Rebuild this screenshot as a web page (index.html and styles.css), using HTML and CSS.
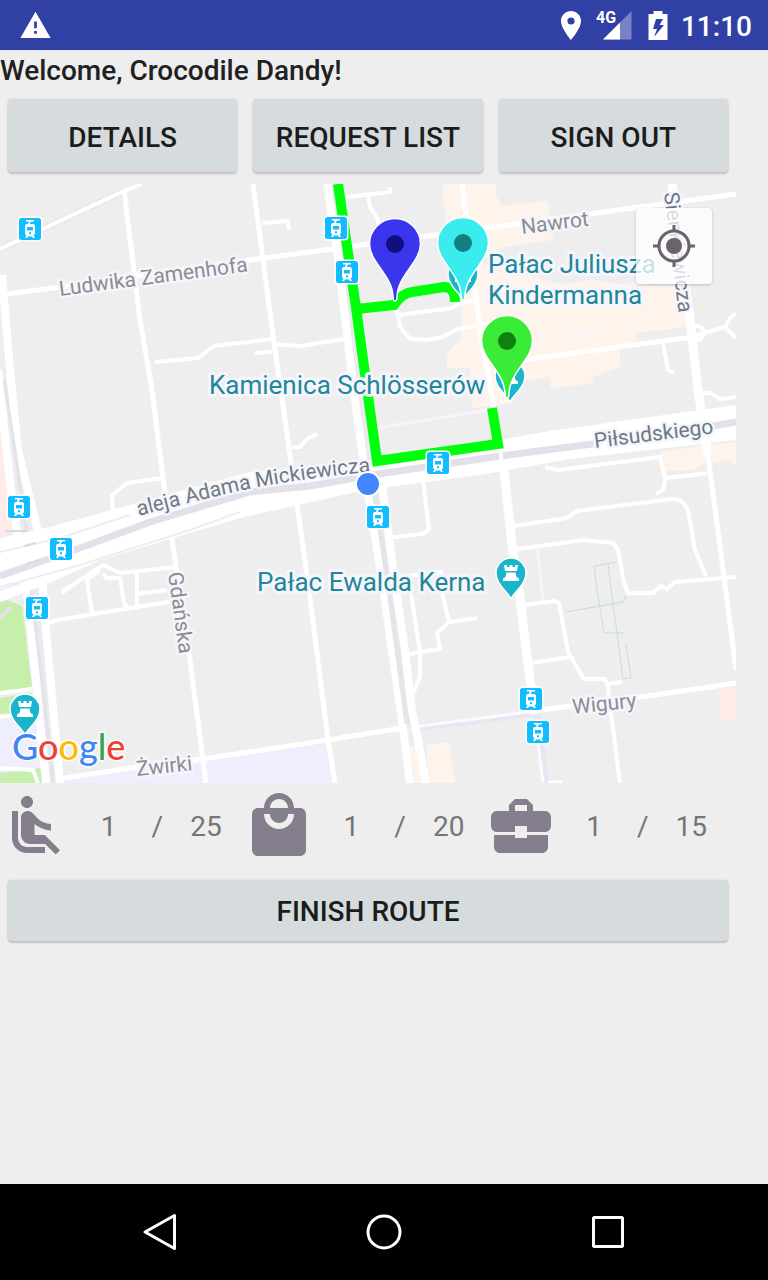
FILE: index.html
```html
<!DOCTYPE html>
<html lang="en">
<head>
<meta charset="utf-8">
<meta name="viewport" content="width=device-width, initial-scale=1">
<title>Route</title>
<link rel="stylesheet" href="styles.css">
</head>
<body>
<header class="status">
  <svg class="status-warning" viewBox="0 0 24 24" aria-hidden="true"><path d="M1 21h22L12 2 1 21zm12-3h-2v-2h2v2zm0-4h-2v-5h2v5z"/></svg>
  <div class="status-right">
    <svg class="status-pin" viewBox="0 0 20 29" aria-hidden="true"><path fill-rule="evenodd" d="M10 0C4.500 0 0 4.400 0 10c0 7.500 10 19 10 19s10-11.500 10-19c0-5.600-4.500-10-10-10zm0 13.600a3.600 3.600 0 1 1 0-7.200 3.600 3.600 0 0 1 0 7.200z"/></svg>
    <svg class="status-signal" viewBox="0 0 36 30" aria-hidden="true"><text class="signal-text" x="0" y="13">4G</text><path opacity=".35" d="M7 29.500 35.500 1v28.500z"/><path d="M7 29.500 24 12.500v17z"/></svg>
    <svg class="status-battery" viewBox="0 0 20 29" aria-hidden="true"><path fill-rule="evenodd" d="M5.500 0h9v3H19.500v26H.5V3h5zM8 8 5 18h4l-3 8 10-12h-4.500L15 8z"/></svg>
    <time class="status-time">11:10</time>
  </div>
</header>

<main class="page">
  <h1 class="welcome">Welcome, Crocodile Dandy!</h1>
  <div class="actions">
    <button class="btn btn-tall" type="button">DETAILS</button>
    <button class="btn btn-tall" type="button">REQUEST LIST</button>
    <button class="btn btn-tall" type="button">SIGN OUT</button>
  </div>

  <section class="map" aria-label="Map">
    <svg class="map-canvas" viewBox="0 184 736 599">
      <defs>
        <g id="tram">
          <rect x="-12.500" y="-12.500" width="25" height="25" rx="4" fill="#fff"/>
          <rect x="-11" y="-11" width="22" height="22" rx="2.500" fill="#12bdff"/>
          <path fill="#fff" fill-rule="evenodd" d="M-4-9H4v1.500H1L-.5-5H3q2 0 2 2V4.500Q5 6 3.500 6.500L5 9H3L2 7.500H-2L-3 9H-5L-3.500 6.500Q-5 6-5 4.500V-3q0-2 2-2h.8L-1-7.500H-4zM-3-2V1.500H3V-2zM-1 3.300V5.300H1V3.300z"/>
        </g>
        <g id="castle">
          <path fill="#1bb4cd" stroke="#fff" stroke-width="1.500" d="M0 26C-3 19-15 12-15 0A15 15 0 0 1 15 0C15 12 3 19 0 26z"/>
          <path fill="#fff" d="M-7-8h3v2h2.500v-2h3v2h2.500v-2h3L6-2H-6zM-4.500-.5H4.500L5.500 4 8 5.500V8H-8V5.500L-5.500 4z"/>
        </g>
        <path id="pin" stroke="#fff" stroke-width="1.500" d="M0 57C-1.500 57-2 54-2 52C-3 31-25.500 18-25.500 0A25.500 25.500 0 0 1 25.500 0C25.500 18 3 31 2 52C2 54 1.500 57 0 57z"/>
        <path id="aleja" d="M139 516Q190 502 248 489Q310 477 380 471"/>
      </defs>

      <rect y="184" width="736" height="599" fill="#eee"/>
      <g fill="#fff4ec">
        <path d="M442 184H496V196L502 206 548 201 553 240 500 248 480 262 560 284 593 280 625 285 683 287 687 327 637 333V340L620 347V367L593 377V383L551 389 549 377 522 382 512 403 472 408 470 368H447V353L460 340 462 313 457 273 450 250z"/>
        <path d="M660 452 709 445V461L693 470 665 471zM712 445 736 442V466L727 460 712 463zM427 745 449 742 455 783H429zM410 747 420 745 423 783H415z"/>
      </g>
      <path fill="#ffecea" d="M0 423 10 497 12 530 0 535zM718 689 736 687V721L722 722z"/>
      <path fill="#f3eeee" d="M55 590 66 585 56 620 48 640z"/>
      <path fill="#eef" d="M0 718 38 714 45 783H0zM62 783 66 778 203 759 325 745 332 783z"/>
      <path fill="#c5efaa" d="M0 602 7 600 22 606 32 687 0 692zM0 698 32 693 33 711 0 714zM0 773 42 768 43 783H0z"/>

      <g fill="none" stroke="#e8e7f1" stroke-width="7">
        <path d="M0 249 124 191"/><path d="M412 728 490 719 538 712"/><path d="M537 715 546 783"/>
      </g>
      <g fill="none" stroke="#f7f4fc" stroke-width="3">
        <path d="M377 428 487 410"/><path d="M537 547 543 600"/><path d="M480 300 515 296M575 323 577 336 598 333M540 298 677 278"/>
      </g>
      <g fill="none" stroke="#fff" stroke-width="4" stroke-linejoin="round">
        <path d="M0 249 124 191 142 184"/>
        <path d="M155 362 198 358 214 346 272 339M255 353 272 352M272 344 300 346 345 339M262 223 288 221 289 230"/>
        <path d="M346 197 390 192V187M368 195 370 207 378 220V235M395 310 400 315 452 308 460 303 477 300M398 313 400 327 410 339 427 340 443 337 458 329 490 323 512 319"/>
        <path d="M292 447 300 447 307 439 317 434M423 480 429 530 422 534 387 538M397 577 443 572M411 593 420 652V677L411 698M403 655 440 649 437 633 449 622 477 618M449 622 442 593M395 607 402 606"/>
        <path d="M113 510 112 495 127 483 163 478M62 592 103 565 120 573 177 567M137 573V607M100 570 87 580 92 613M103 574 107 578 120 578 124 603 128 608M48 623 57 620 137 607 170 602M137 594 167 590M62 593 80 580"/>
        <path d="M545 467 558 470 660 457 665 480 663 490 656 494M665 478 710 473M703 393 710 393 720 399 736 397M513 526 567 518 577 511 672 499Q680 499 684 504L688 510 695 550 706 576"/>
        <path d="M517 549 583 540 613 543 618 550 624 583 628 593 653 593 661 586 667 589 675 582 736 577M523 605 555 601 559 603 568 652 584 679 605 679 608 687 611 713 620 783M532 663 570 657M608 684 622 682"/>
        <path d="M690 337 725 327 736 338M725 327 730 318 736 313M663 343 668 370 674 373M548 783 562 782"/>
        <circle cx="697" cy="333" r="7"/>
        <path d="M0 693 32 689M0 717 40 712M0 768 33 770 38 783"/>
      </g>
      <path fill="none" stroke="#e2e0e6" stroke-width="4" d="M0 618 11 607"/>
      <g fill="none" stroke="#fff" stroke-width="5" stroke-linejoin="round">
        <path d="M124 190 140 320 152 390 163 478 172 540 188 645 203 760 206 783"/>
        <path d="M0 295 60 287 250 260 332 249 530 222 736 194"/>
        <path d="M253 184 275 350 295 490 309 590 328 740 335 783"/>
        <path d="M58 779 130 768 203 759 328 740 402 728 420 728M540 710 620 700 736 683"/>
        <path d="M462 184 467 225 480 330 491 390 500 450"/>
        <path d="M523 360 693 337"/>
        <path d="M708 455 727 600 736 670"/>
      </g>
      <path fill="none" stroke="#fafaff" stroke-width="3" d="M412 727 490 717 540 710M535 720 543 783"/>
      <path fill="none" stroke="#fff" stroke-width="9" d="M672 184 690 320 698 390 708 455M501 450 505 480 513 553 519 590 530 680 535 714"/>

      <path fill="#ebeaef" d="M0 290 8 400 20 520 30 600 46 783H58L44 620 38 540 18 450 4 290zM332 184 343 184 360 310 375 460 392 560 406 655 420 730 402 730 386 600 365 480z"/>
      <g fill="none" stroke="#fff" stroke-width="8">
        <path d="M-2 370 12 500 28 600 46 783"/>
        <path d="M2 275 10 370 18 450 40 540 45 620 60 783"/>
        <path d="M327 184 337 250 353 385 366 480 382 580 402 720 410 783"/>
        <path d="M382 485 396 590 405 650 412 710 418 740 426 783"/>
      </g>
      <path fill="none" stroke="#e3e2ea" stroke-width="3" d="M4 380 15 450 26 530 32 600 42 680 53 783"/>
      <path fill="none" stroke="#e6e4ea" stroke-width="5" d="M374 490 389 590 407 724"/>
      <path fill="#fff" d="M0 538 50 527 250 472 365 462 378 458 500 440 550 431 736 405V440L570 459 480 475 365 490 240 518 100 560 50 583 0 602z"/>
      <path fill="none" stroke="#e2e1e9" stroke-width="7" d="M0 576 80 548 150 522 250 492 310 486 372 475 500 456 600 443M708 427 736 422"/>
      <path fill="none" stroke="#ededf5" stroke-width="2" d="M0 552 60 538 130 515M0 587 80 565 190 530 240 512M0 590 20 583"/>
      <path fill="none" stroke="#d9d9e0" stroke-width="2" d="M5 531H28M24 546 36 543M26 564 40 560M97 68"/>
      <path fill="none" stroke="#fff" stroke-width="4" d="M500 448 503 472"/>
      <g fill="none" stroke="#c5e0ca">
        <path d="M597 590 594 566 617 562M608 563 610 580 623 679 631 678 626 645M597 590 604 633 625 633M566 612 623 602 626 596"/>
      </g>

      <g class="street">
        <text transform="translate(60 296) rotate(-7.500)">Ludwika Zamenhofa</text>
        <text transform="translate(522 234) rotate(-7)">Nawrot</text>
        <text transform="translate(168 573) rotate(82)">Gdańska</text>
        <text transform="translate(573 714) rotate(-6)">Wigury</text>
        <text transform="translate(137 776) rotate(-6)">Żwirki</text>
      </g>
      <g class="street street-main">
        <text transform="translate(664 193) rotate(83)">Sienkiewicza</text>
        <text transform="translate(595 448) rotate(-7)">Piłsudskiego</text>
        <text><textPath href="#aleja">aleja Adama Mickiewicza</textPath></text>
      </g>

      <path fill="none" stroke="#00ff0a" stroke-width="10" d="M338 184 356 308 377 461 498 444 492 408M356 309 394 305 Q402 293 412 292L444 287Q455 287 455 302"/>

      <g class="poi">
        <text x="488" y="273">Pałac Juliusza</text>
        <text x="488" y="304">Kindermanna</text>
        <text x="209" y="394">Kamienica Schlösserów</text>
        <text x="257" y="591">Pałac Ewalda Kerna</text>
      </g>

      <use href="#castle" x="463" y="274"/>
      <use href="#castle" x="510" y="376"/>
      <use href="#castle" x="511" y="573"/>
      <use href="#castle" x="25" y="709"/>
      <use href="#tram" x="30" y="229"/>
      <use href="#tram" x="336" y="228"/>
      <use href="#tram" x="347" y="272"/>
      <use href="#tram" x="438" y="463"/>
      <use href="#tram" x="378" y="517"/>
      <use href="#tram" x="19" y="507"/>
      <use href="#tram" x="61" y="549"/>
      <use href="#tram" x="37" y="608"/>
      <use href="#tram" x="531" y="699"/>
      <use href="#tram" x="538" y="732"/>
      <circle cx="368" cy="484" r="12" fill="#4285ff" stroke="#fff" stroke-width="2"/>
      <use href="#pin" x="395" y="244" fill="#3a36ee"/><circle cx="395" cy="244" r="9" fill="#110f80"/>
      <use href="#pin" x="463" y="243" fill="#3aecee"/><circle cx="463" cy="243" r="9" fill="#118080"/>
      <use href="#pin" x="507" y="341" fill="#3aec38"/><circle cx="507" cy="341" r="9" fill="#11800f"/>

      <text class="google" x="12" y="760"><tspan fill="#4285f4">G</tspan><tspan fill="#ea4335">o</tspan><tspan fill="#fbbc05">o</tspan><tspan fill="#4285f4">g</tspan><tspan fill="#34a853">l</tspan><tspan fill="#ea4335">e</tspan></text>
    </svg>
    <button class="locate" type="button" aria-label="My location">
      <svg class="locate-icon" viewBox="0 0 42 42" aria-hidden="true"><circle cx="21" cy="21" r="8" fill="#6b626b"/><g fill="none" stroke="#6b626b" stroke-width="3"><circle cx="21" cy="21" r="15"/><path d="M21 0v7M21 35v7M0 21h7M35 21h7"/></g></svg>
    </button>
  </section>

  <div class="stats">
    <div class="stat">
      <svg class="stat-icon" viewBox="0 0 24 24" role="img" aria-label="Seats"><path d="M7.590 5.410c-.78-.78-.78-2.050 0-2.830.78-.78 2.050-.78 2.830 0 .78.78.78 2.050 0 2.830-.79.79-2.050.79-2.830 0zM6 16V7H4v9c0 2.760 2.240 5 5 5h6v-2H9c-1.660 0-3-1.340-3-3zm14 4.070L14.930 15H11.500v-3.680c1.400 1.150 3.600 2.160 5.500 2.160v-2.160c-1.660.02-3.610-.87-4.670-2.040l-1.400-1.550c-.19-.21-.43-.38-.69-.5-.29-.14-.62-.23-.96-.23h-.03C8.010 7 7 8.010 7 9.250V15c0 1.660 1.340 3 3 3h5.070l3.500 3.500L20 20.070z"/></svg>
      <span class="stat-value">1</span><span class="stat-slash">/</span><span class="stat-value">25</span>
    </div>
    <div class="stat">
      <svg class="stat-icon" viewBox="0 0 24 24" role="img" aria-label="Bags"><path d="M19 6h-2c0-2.760-2.240-5-5-5S7 3.240 7 6H5c-1.100 0-1.990.9-1.990 2L3 20c0 1.100.9 2 2 2h14c1.100 0 2-.9 2-2V8c0-1.100-.9-2-2-2zm-7-3c1.660 0 3 1.340 3 3H9c0-1.660 1.340-3 3-3zm0 10c-2.760 0-5-2.240-5-5h2c0 1.660 1.340 3 3 3s3-1.340 3-3h2c0 2.760-2.240 5-5 5z"/></svg>
      <span class="stat-value">1</span><span class="stat-slash">/</span><span class="stat-value">20</span>
    </div>
    <div class="stat">
      <svg class="stat-icon" viewBox="0 0 24 24" role="img" aria-label="Cases"><path d="M10 16v-1H3.010L3 19c0 1.110.89 2 2 2h14c1.110 0 2-.89 2-2v-4h-7v1h-4zm10-9h-4.010V5l-2-2h-4l-2 2v2H4c-1.100 0-2 .9-2 2v3c0 1.110.89 2 2 2h6v-2h4v2h6c1.100 0 2-.9 2-2V9c0-1.100-.9-2-2-2zm-6 0h-4V5h4v2z"/></svg>
      <span class="stat-value">1</span><span class="stat-slash">/</span><span class="stat-value">15</span>
    </div>
  </div>

  <div class="finish">
    <button class="btn" type="button">FINISH ROUTE</button>
  </div>
</main>

<nav class="navbar" aria-label="System">
  <button class="nav-btn" type="button" aria-label="Back"><svg class="nav-icon" viewBox="0 0 40 40"><path d="M34.500 3.500v33L5 20z"/></svg></button>
  <button class="nav-btn" type="button" aria-label="Home"><svg class="nav-icon" viewBox="0 0 40 40"><circle cx="20" cy="20" r="16"/></svg></button>
  <button class="nav-btn" type="button" aria-label="Recent apps"><svg class="nav-icon" viewBox="0 0 40 40"><rect x="5.500" y="5.500" width="29" height="29" rx="1"/></svg></button>
</nav>
</body>
</html>
```
FILE: styles.css
```css
* {
  box-sizing: border-box;
}

body {
  margin: 0;
  min-height: 100vh;
  display: flex;
  flex-direction: column;
  background: #eee;
  color: #212121;
  font-family: Roboto, "Noto Sans", sans-serif;
  font-size: 28px;
}

button {
  margin: 0;
  padding: 0;
  border: 0;
  font: inherit;
  color: inherit;
  cursor: pointer;
}

.status {
  display: flex;
  align-items: center;
  justify-content: space-between;
  height: 50px;
  padding: 0 16px 0 19px;
  background: #3140a5;
  color: #fff;
  fill: #fff;
}

.status-warning {
  width: 33px;
  height: 33px;
}

.status-right {
  display: flex;
  align-items: center;
}

.status-pin {
  width: 20px;
  height: 29px;
  margin-right: 15px;
}

.status-signal {
  width: 36px;
  height: 30px;
  margin-right: 16px;
  overflow: visible;
}

.signal-text {
  font-size: 16px;
  font-weight: 700;
}

.status-battery {
  width: 20px;
  height: 29px;
  margin-right: 13px;
}

.status-time {
  padding-top: 3px;
  font-weight: 500;
  line-height: 47px;
}

.page {
  flex: 1;
  padding-right: 32px;
}

.welcome {
  margin: 0;
  font-size: 28px;
  font-weight: 500;
  line-height: 41px;
}

.actions {
  display: grid;
  grid-template-columns: repeat(3, 1fr);
  gap: 16px;
  padding: 8px 8px 12px;
}

.btn {
  width: 100%;
  height: 61px;
  padding-top: 2px;
  border-radius: 4px;
  background: #d6dbde;
  color: #1b1d1c;
  font-weight: 500;
  box-shadow: 0 2px 2px rgba(80, 60, 80, 0.24), 0 0 2px rgba(80, 60, 80, 0.16);
}

.btn-tall {
  height: 73px;
  padding-top: 4px;
}

.map {
  position: relative;
}

.map-canvas {
  display: block;
  width: 100%;
  height: auto;
}

.street {
  fill: #8b8d90;
  font-size: 21px;
  stroke: #f5f5fd;
  stroke-width: 5px;
  stroke-linejoin: round;
  paint-order: stroke;
}

.street-main {
  fill: #6c7980;
}

.poi {
  fill: #1f8796;
  font-size: 26px;
  stroke: #f5f5fd;
  stroke-width: 6px;
  stroke-linejoin: round;
  paint-order: stroke;
}

.google {
  font-family: Lato, sans-serif;
  font-size: 36px;
  font-weight: 500;
  stroke: #fff;
  stroke-width: 3px;
  stroke-linejoin: round;
  paint-order: stroke;
}

.locate {
  position: absolute;
  top: 24px;
  right: 24px;
  display: grid;
  place-items: center;
  width: 76px;
  height: 76px;
  border-radius: 4px;
  background: rgba(255, 255, 255, 0.75);
  box-shadow: 0 1px 3px rgba(0, 0, 0, 0.2);
}

.locate-icon {
  width: 42px;
  height: 42px;
}

.stats {
  display: grid;
  grid-template-columns: repeat(3, 1fr);
  padding: 7px 8px 18px 0;
}

.stat {
  display: flex;
  align-items: center;
  color: #757575;
  text-align: center;
}

.stat-icon {
  width: 72px;
  height: 72px;
  fill: #857e8c;
}

.stat-value {
  flex: 1;
}

.stat-slash {
  width: 24px;
}

.finish {
  padding: 0 8px;
}

.navbar {
  display: grid;
  grid-template-columns: repeat(3, 1fr);
  height: 96px;
  padding: 0 48px;
  background: #000;
}

.nav-btn {
  display: grid;
  place-items: center;
  background: none;
}

.nav-icon {
  width: 40px;
  height: 40px;
  fill: none;
  stroke: #fff;
  stroke-width: 3px;
  stroke-linejoin: round;
}
```
